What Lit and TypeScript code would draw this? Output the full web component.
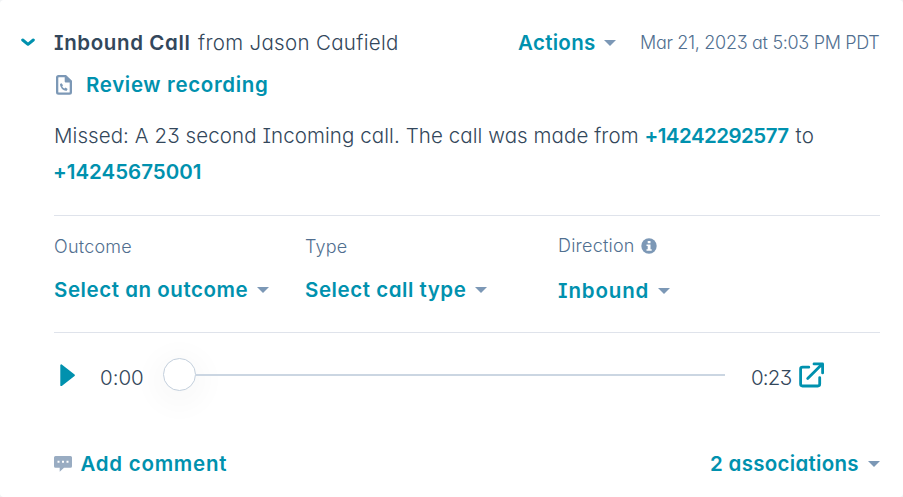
import { LitElement, html, css } from "lit";
import { customElement } from "lit/decorators.js";

@customElement("app-root")
export class AppRoot extends LitElement {
  static styles = css`
    :host {
      display: block;
      height: 497px;
      background: #f1f3f5;
      font-family: Inter, "Open Sans", sans-serif;
      font-size: 20.5px;
      font-weight: 300;
      font-feature-settings: "cv11", "cv08", "cv09", "calt" 0;
      color: #33475b;
    }
    .card {
      box-sizing: border-box;
      height: 497px;
      padding: 22px 23px 0 54px;
      background: #fff;
      border-radius: 4px;
      overflow: hidden;
    }
    svg { display: block; flex: none; }
    .row { display: flex; align-items: center; white-space: pre; }
    .title { height: 41px; margin-left: -34px; }
    .chev { margin-right: 18px; }
    b, .link { font-weight: 600; }
    .link { color: #0091ae; }
    .name { width: 144px; letter-spacing: 0.62px; }
    .from { flex: 1; letter-spacing: 0.32px; }
    .caret {
      width: 0;
      flex: none;
      border: 6px solid transparent;
      border-top-color: #7c98b6;
      border-bottom: 0;
    }
    .actions { width: 86px; letter-spacing: 0.3px; }
    .date { width: 240px; margin-left: 24px; font-size: 18px; letter-spacing: -0.31px; color: #516f90; }
    .review { height: 43px; letter-spacing: 0.66px; }
    .review svg { margin-right: 13px; }
    .body { margin: 12px 0 0; line-height: 36px; white-space: nowrap; }
    .msg { letter-spacing: 0.08px; }
    .from-number { letter-spacing: -0.53px; }
    .to { margin-left: 1px; letter-spacing: 0.5px; }
    .to-number { margin-left: -1px; }
    .fields {
      box-sizing: border-box;
      display: grid;
      grid-template-columns: 251px 253px 1fr;
      height: 118px;
      margin-top: 25px;
      padding-top: 18px;
      border: solid #dfe3eb;
      border-width: 1px 0;
    }
    .label { height: 25px; font-size: 18px; letter-spacing: 0.22px; color: #516f90; }
    .label svg { margin-left: 6px; }
    .value { height: 37px; margin-top: 12px; letter-spacing: 0.55px; }
    .value .caret { margin-left: 8.500px; }
    .shift .label { margin-top: -1px; }
    .shift .value { margin-top: 14px; letter-spacing: 0.85px; }
    .player { height: 84px; padding-left: 6px; }
    .time { padding-top: 5px; }
    .start { width: 63px; margin-left: 25px; }
    .end { width: 48px; margin-left: 26px; letter-spacing: -0.8px; }
    .slider { display: flex; align-items: center; width: 562px; }
    .knob {
      box-sizing: border-box;
      width: 33px;
      height: 33px;
      margin-top: -2px;
      border: 1.500px solid #c3cfdc;
      border-radius: 50%;
      background: #fff;
      box-shadow: 0 6px 26px 12px rgba(0, 0, 0, 0.022);
    }
    .track { flex: 1; height: 2px; background: #cbd6e2; }
    .footer { height: 43px; margin-top: 25px; }
    .comment { margin-left: 8.500px; flex: 1; letter-spacing: 0.73px; }
    .assoc { width: 158px; letter-spacing: 0.3px; }
  `;

  render() {
    return html`
      <main class="card">
        <header class="row title">
          <svg class="chev" width="16" height="9" viewBox="0 0 16 9" fill="none" stroke="#0091ae" stroke-width="3" stroke-linecap="round" stroke-linejoin="round"><path d="M2.700 2 8 6.300l5.300-4.300"/></svg>
          <b class="name">Inbound Call</b><span class="from">from Jason Caufield</span>
          <span class="link actions">Actions</span><i class="caret"></i>
          <time class="date">Mar 21, 2023 at 5:03 PM PDT</time>
        </header>
        <div class="row review">
          <svg width="19" height="20" viewBox="0 0 19 20"><path fill="#7c98b6" fill-rule="evenodd" d="M4.500 0H12l6 5.700v11.500a2.500 2.500 0 0 1-2.500 2.500h-11A2.500 2.500 0 0 1 2 17.200V2.500A2.500 2.500 0 0 1 4.500 0Zm.3 2.300q-.5 0-.5.5v14.100q0 .5.5.5h10.400q.5 0 .5-.5V7.500H11.700Q10.700 7.500 10.700 6.500V2.300Z"/><path fill="#7c98b6" d="M6 9.100 7.600 8.300 9 10.300 8.200 11.400Q9 12.900 10.500 13.400L11.600 12.600 13.600 14 12.800 15.700Q10.500 16.300 8 14 5.700 11.500 6 9.100Z"/></svg>
          <span class="link">Review recording</span>
        </div>
        <p class="body"><span class="msg">Missed: A 23 second Incoming call. The call was made from</span> <span class="link from-number">+14242292577</span> <span class="to">to</span><br><span class="link to-number">+14245675001</span></p>
        <section class="fields">
          <div>
            <div class="row label">Outcome</div>
            <div class="row value"><span class="link">Select an outcome</span><i class="caret"></i></div>
          </div>
          <div>
            <div class="row label">Type</div>
            <div class="row value"><span class="link">Select call type</span><i class="caret"></i></div>
          </div>
          <div class="shift">
            <div class="row label"><span>Direction</span><svg width="16" height="16" viewBox="0 0 16 16"><circle cx="8" cy="8" r="7.700" fill="#7c98b6"/><path fill="#fff" d="M6.700 3h2.800v2.300H6.700zM5.500 6.500h4v4.800h1.200v1.500H5.500v-1.500h1.200V8H5.500z"/></svg></div>
            <div class="row value"><span class="link">Inbound</span><i class="caret"></i></div>
          </div>
        </section>
        <section class="row player">
          <svg width="15" height="23" viewBox="0 0 15 23"><path d="M1.200 1.200v20L14 11.200Z" fill="#0091ae" stroke="#0091ae" stroke-width="1.800" stroke-linejoin="round"/></svg>
          <span class="time start">0:00</span>
          <div class="slider"><span class="knob"></span><span class="track"></span></div>
          <span class="time end">0:23</span>
          <svg width="26" height="26" viewBox="0 0 26 26" fill="none" stroke="#0091ae" stroke-width="2.800" stroke-linecap="round" stroke-linejoin="round"><path d="M9.800 5.200H3.500Q1.600 5.200 1.600 7.100v15q0 1.900 1.900 1.900h15.300q1.900 0 1.900-1.900v-6.500M8.700 16.500 22.500 2.700M15 1.900h8.600v9"/></svg>
        </section>
        <footer class="row footer">
          <svg width="18" height="16" viewBox="0 0 18 16"><path fill="#99acc2" d="M1.500 0h15Q18 0 18 1.500v8.700q0 1.500-1.500 1.500H10L5.700 15.700V11.700H1.500Q0 11.700 0 10.200V1.500Q0 0 1.500 0Z"/><path fill="#fff" d="M3.500 4.800h2v2h-2zM8 4.800h2v2H8zM12.500 4.800h2v2h-2z"/></svg>
          <span class="link comment">Add comment</span>
          <span class="link assoc">2 associations</span><i class="caret"></i>
        </footer>
      </main>
    `;
  }
}
